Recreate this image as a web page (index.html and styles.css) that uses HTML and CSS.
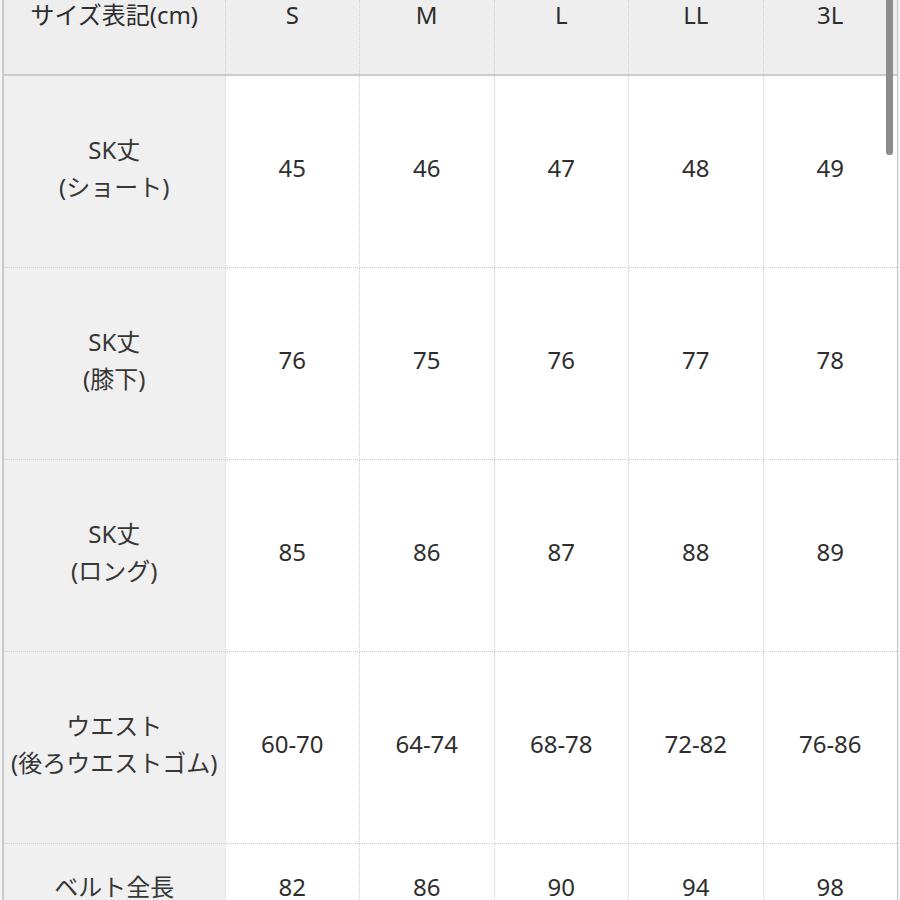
FILE: index.html
```html
<!DOCTYPE html>
<html lang="ja">
<head>
<meta charset="utf-8">
<title>サイズ表</title>
<link rel="stylesheet" href="styles.css">
</head>
<body>
<div class="wrap">
  <table class="size-table">
    <colgroup>
      <col class="col-label">
      <col><col><col><col><col>
    </colgroup>
    <thead>
      <tr>
        <th class="label">サイズ表記(cm)</th>
        <th>S</th>
        <th>M</th>
        <th>L</th>
        <th>LL</th>
        <th>3L</th>
      </tr>
    </thead>
    <tbody>
      <tr>
        <td class="label">SK丈<br>(ショート)</td>
        <td>45</td><td>46</td><td>47</td><td>48</td><td>49</td>
      </tr>
      <tr>
        <td class="label">SK丈<br>(膝下)</td>
        <td>76</td><td>75</td><td>76</td><td>77</td><td>78</td>
      </tr>
      <tr>
        <td class="label">SK丈<br>(ロング)</td>
        <td>85</td><td>86</td><td>87</td><td>88</td><td>89</td>
      </tr>
      <tr>
        <td class="label">ウエスト<br>(後ろウエストゴム)</td>
        <td>60-70</td><td>64-74</td><td>68-78</td><td>72-82</td><td>76-86</td>
      </tr>
      <tr class="last">
        <td class="label">ベルト全長</td>
        <td>82</td><td>86</td><td>90</td><td>94</td><td>98</td>
      </tr>
    </tbody>
  </table>
  <div class="scroll-thumb"></div>
</div>
</body>
</html>
```

FILE: styles.css
```css
html, body {
  margin: 0;
  padding: 0;
  background: #f4f4f4;
  overflow: hidden;
  height: 900px;
}

.wrap {
  position: relative;
  padding-left: 2px;
  height: 900px;
  overflow: hidden;
}

.size-table {
  border-collapse: collapse;
  table-layout: fixed;
  width: 896px;
  background: #ffffff;
  border-left: 2px solid #c9c9c9;
  border-right: 1px solid #c4c4c4;
  font-family: "Noto Sans", "Noto Sans CJK JP", sans-serif;
  font-size: 24px;
  color: #2e2e2e;
}

.col-label {
  width: 222px;
}

.size-table th {
  background: #eeeeee;
  font-weight: normal;
  line-height: 26px;
  height: 26px;
  padding: 2px 0 46px 0;
  vertical-align: top;
  text-align: center;
  border-right: 1px dotted #cfcfcf;
  border-bottom: 2px solid #cbcbcb;
}

.size-table td {
  height: 183px;
  padding: 0 0 8px 0;
  text-align: center;
  vertical-align: middle;
  line-height: 37px;
  border-right: 1px dotted #cfcfcf;
  border-bottom: 1px dotted #cfcfcf;
}

.size-table td.label {
  background: #f0f0f0;
  color: #363636;
}

.size-table tr.last td {
  height: 84px;
}

.scroll-thumb {
  position: absolute;
  top: 0;
  left: 886px;
  width: 7px;
  height: 155px;
  background: #8c8c8c;
  border-radius: 0 0 3px 3px;
}
```
